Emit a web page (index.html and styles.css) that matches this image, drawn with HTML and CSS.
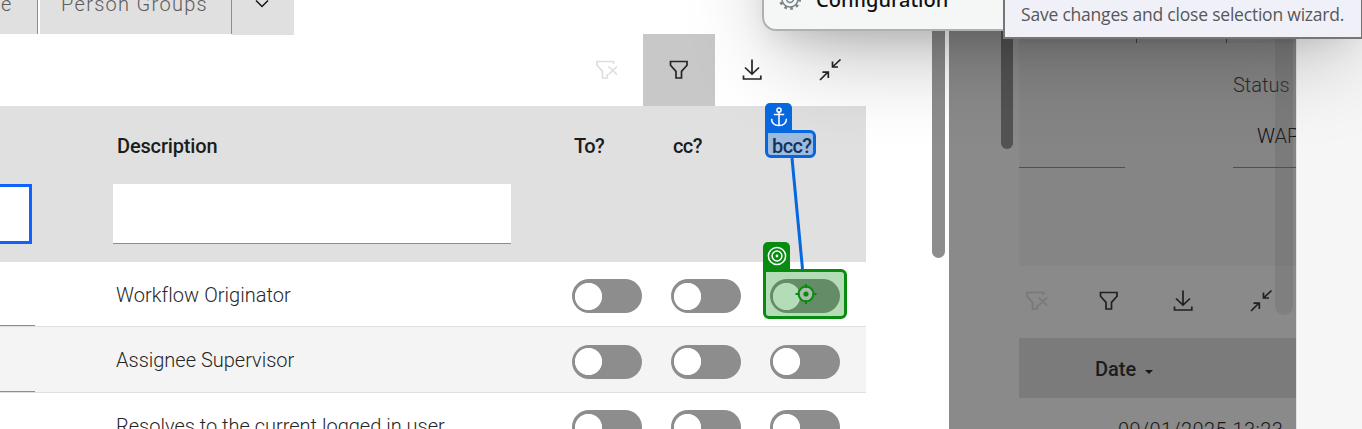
FILE: index.html
```html
<!DOCTYPE html>
<html lang="en">
<head>
<meta charset="utf-8">
<title>Person Groups</title>
<link rel="stylesheet" href="styles.css">
</head>
<body>
<svg class="defs" width="0" height="0" aria-hidden="true">
  <symbol id="i-funnel" viewBox="0 0 24 24"><path d="M3.500 3.500h16.500v3.700l-5.500 6.200v6.600h-5.500v-6.600l-5.500-6.200z"/></symbol>
  <symbol id="i-funnel-x" viewBox="0 0 24 24"><path d="M18.500 6V3.500H2v3.700l5.500 6.200v6.600h4.800v-4M13.500 8.500l8.500 8M22 8.500l-8.500 8"/></symbol>
  <symbol id="i-download" viewBox="0 0 24 24"><path d="M12 1.500v14M5 9.500l7 6.500 7-6.500M3.500 17.500v3.500h17.300v-3.500"/></symbol>
  <symbol id="i-collapse" viewBox="0 0 24 24"><path d="M22.500 1.500l-7.500 7M14.500 3.500v5.500h5.500M2 22l7.500-7.500M4.500 14.200h5.800V20"/></symbol>
</svg>
<div class="app">
  <main class="wizard">
    <div class="wizard-body">
      <nav class="tabs">
        <div class="tab tab-cut"><span>e</span></div>
        <div class="tab tab-groups"><span>Person Groups</span></div>
        <div class="tab-more"><svg width="16" height="10" viewBox="0 0 16 10"><path d="M2 .500l6 6 6-6"/></svg></div>
      </nav>
      <div class="toolbar">
        <div class="tool tool-off"><svg class="icon"><use href="#i-funnel-x"/></svg></div>
        <div class="tool tool-on"><svg class="icon"><use href="#i-funnel"/></svg></div>
        <div class="tool tool-download"><svg class="icon"><use href="#i-download"/></svg></div>
        <div class="tool tool-collapse"><svg class="icon"><use href="#i-collapse"/></svg></div>
      </div>
      <div class="table-head">
        <div class="cell-key"><div class="input input-focus"></div></div>
        <div class="cell-desc"><b class="t-desc">Description</b><div class="input"></div></div>
        <b class="cell-to">To?</b>
        <b class="cell-cc">cc?</b>
        <b class="cell-bcc">bcc?</b>
      </div>
      <div class="row">
        <div class="cell-key"></div><div class="cell-desc t-r1">Workflow Originator</div>
        <i class="toggle"></i><i class="toggle"></i><i class="toggle"></i>
      </div>
      <div class="row row-alt">
        <div class="cell-key"></div><div class="cell-desc t-r2">Assignee Supervisor</div>
        <i class="toggle"></i><i class="toggle"></i><i class="toggle"></i>
      </div>
      <div class="row row-last">
        <div class="cell-key"></div><div class="cell-desc t-r3">Resolves to the current logged in user</div>
        <i class="toggle"></i><i class="toggle"></i><i class="toggle"></i>
      </div>
    </div>
    <div class="scroll"></div>
  </main>
  <section class="page">
    <div class="page-gutter"><div class="page-thumb"></div></div>
    <div class="page-body">
      <div class="page-tabs"><i></i><i></i><i></i></div>
      <div class="form">
        <div class="field field-empty"></div>
        <div class="field field-status"><span class="t-status">Status</span><span class="t-wappr">WAPPR</span></div>
      </div>
      <div class="page-tools">
        <svg class="icon faint"><use href="#i-funnel-x"/></svg>
        <svg class="icon"><use href="#i-funnel"/></svg>
        <svg class="icon"><use href="#i-download"/></svg>
        <svg class="icon last"><use href="#i-collapse"/></svg>
      </div>
      <div class="date-head"><b class="t-date">Date</b><i class="caret"></i></div>
      <div class="date-row"><span class="t-time">09/01/2025 13:23</span></div>
      <div class="page-thumb2"></div>
    </div>
  </section>
  <aside class="edge"></aside>
</div>

<div class="shade"></div>
<div class="menu">
  <svg width="24" height="24" viewBox="-12 -12 24 24" class="gear"><circle r="8"/><circle r="3.500"/><circle r="9.600" class="teeth"/></svg>
  <span class="t-config">Configuration</span>
</div>
<div class="tooltip"><span class="t-tip">Save changes and close selection wizard.</span></div>

<svg class="link" width="40" height="120" viewBox="0 0 40 120"><path d="M12 3L22.500 114"/></svg>
<div class="marker anchor">
  <div class="badge"><svg width="20" height="22" viewBox="0 0 20 22"><circle cx="10" cy="4" r="2.100"/><path d="M10 6v14M4.800 8.500h10.400M2.600 12.800c0 4.500 3 6.800 7.400 6.800s7.400-2.300 7.400-6.800"/></svg></div>
</div>
<div class="marker target">
  <div class="badge"><svg width="20" height="20" viewBox="0 0 20 20"><circle cx="10" cy="10" r="8.600"/><circle cx="10" cy="10" r="4.900"/><circle cx="10" cy="10" r="1.400" class="dot"/></svg></div>
  <svg class="cross" width="22" height="22" viewBox="0 0 22 22"><circle cx="11" cy="11" r="7.400"/><circle cx="11" cy="11" r="2.600" class="dot"/><path d="M11 1v4M11 17v4M.500 11h4M17.500 11h4"/></svg>
</div>
</body>
</html>
```
FILE: styles.css
```css
* { box-sizing: border-box; }
body { margin: 0; width: 1362px; height: 429px; overflow: hidden; position: relative; background: #fff; color: #262626; font: 300 20px/26px Roboto, "Liberation Sans", sans-serif; }
b { font-weight: 500; color: #1c1c1c; }
span, b { white-space: nowrap; }
.defs { position: absolute; }
.app { display: flex; width: 1362px; height: 429px; }

.wizard { width: 949px; display: flex; justify-content: space-between; background: #fff; overflow: hidden; }
.wizard-body { width: 866px; }
.scroll { width: 13px; height: 258px; margin-right: 4px; border-radius: 0 0 7px 7px; background: #8d8d8d; }

.tabs { display: flex; height: 34px; color: #5c5c5c; }
.tab { height: 34px; background: #e0e0e0; border-right: 1px solid #8d8d8d; }
.tab span { display: block; margin-top: -9px; }
.tab-cut { width: 38px; margin-right: 2px; }
.tab-cut span { padding-left: 1px; }
.tab-groups { width: 192px; padding-left: 21px; letter-spacing: 1.3px; }
.tab-more { width: 62px; height: 35px; padding-left: 22px; background: #e0e0e0; }
.tab-more svg { display: block; fill: none; stroke: #161616; stroke-width: 1.500; }

.toolbar { display: flex; height: 72px; padding-left: 571px; }
.tool { width: 72px; height: 72px; display: grid; place-items: center; }
.tool-on { background: #c8c8c8; }
.tool-download { margin-left: 2px; }
.tool-collapse { margin-left: 6px; }
.tool-off { color: #dedede; }
.icon { width: 24px; height: 24px; display: block; fill: none; stroke: currentColor; stroke-width: 1.700; }

.table-head { display: flex; height: 156px; background: #e0e0e0; }
.table-head > b { padding-top: 27px; letter-spacing: -.6px; }
.cell-key { width: 113px; flex: none; }
.cell-desc { width: 459px; flex: none; }
.table-head .cell-desc { padding: 27px 61px 0 0; }
.t-desc { display: block; padding-left: 4px; height: 51px; letter-spacing: -.15px; }
.table-head .cell-key { padding-top: 78px; }
.input { height: 60px; background: #fff; border-bottom: 1px solid #8d8d8d; }
.input-focus { width: 32px; border: 3px solid #0f62fe; border-left: 0; }
.cell-to { width: 99px; padding-left: 2px; }
.cell-cc { width: 99px; padding-left: 2px; }
.cell-bcc { padding-left: 2px; }

.row { display: flex; height: 65px; padding-top: 17px; border-bottom: 1px solid #dedfde; }
.row .cell-key { height: 47px; background: linear-gradient(#8d8d8d, #8d8d8d) 0 100% / 35px 1px no-repeat; }
.row .cell-desc { padding: 3px 0 0 3px; }
.t-r1 { letter-spacing: .05px; }
.row-alt { height: 66px; padding-top: 18px; background: #f4f4f4; }
.row-alt .cell-desc { padding-top: 2px; }
.row-last { height: 70px; border: 0; }
.toggle { width: 70px; height: 34px; margin-right: 29px; flex: none; border-radius: 17px; background: radial-gradient(circle at 16.500px 17.500px, #fff 13.200px, #8d8d8d 14px); }
.row-alt .toggle { background: radial-gradient(circle at 16.500px 16.500px, #fff 13.200px, #8d8d8d 14px); }

.page { width: 347px; display: flex; background: #8a8a8a; overflow: hidden; }
.page-gutter { width: 70px; padding-left: 52px; flex: none; }
.page-thumb { width: 12px; height: 149px; border-radius: 0 0 6px 6px; background: #535353; }
.page-body { width: 277px; position: relative; }
.page-tabs { height: 43px; background: #7f7f7f; display: flex; }
.page-tabs i { border-right: 1px solid #3f3f3f; }
.page-tabs i:nth-child(1) { width: 118px; }
.page-tabs i:nth-child(2) { width: 90px; }
.page-tabs i:nth-child(3) { border: 0; }
.form { height: 223px; display: flex; justify-content: space-between; background: #858585; }
.field { height: 125px; border-bottom: 1px solid #505050; }
.field-empty { width: 106px; }
.field-status { width: 63px; padding-top: 29px; overflow: hidden; }
.t-status { display: block; height: 51px; color: #2c2c2c; }
.t-wappr { display: block; padding-left: 24px; color: #101010; }
.page-tools { height: 72px; display: flex; gap: 50px; padding: 23px 0 0 6px; color: #202020; }
.page-tools .icon { flex: none; }
.page-tools .faint { color: #787878; margin-right: -2px; }
.page-tools .last { margin-left: 4px; }
.date-head { height: 60px; display: flex; padding: 18px 0 0 76px; background: #7b7b7b; }
.caret { width: 0; height: 0; margin: 14px 0 0 9px; border: 4px solid transparent; border-top: 4px solid #161616; border-bottom: 0; }
.date-row { padding: 19px 0 0 99px; color: #181818; letter-spacing: .45px; }
.page-thumb2 { position: absolute; right: 3px; top: 0; width: 18px; height: 315px; border-radius: 0 0 9px 9px; background: rgba(95, 90, 90, .22); }
.edge { width: 66px; background: #f6f6f6; border-left: 1px solid #e4e4e4; }

.shade { position: absolute; left: 772px; top: -200px; width: 580px; height: 226px; box-shadow: 0 34px 90px -8px rgba(0, 0, 0, .28), 0 10px 30px 0 rgba(0, 0, 0, .12); }
.menu { position: absolute; left: 762px; top: -20px; width: 300px; height: 51px; border: 2px solid #adb1b3; border-radius: 0 0 0 14px; background: #f4f7f6; }
.gear { position: absolute; left: 14px; top: 5px; fill: none; stroke: #7d858b; stroke-width: 1.500; }
.gear .teeth { stroke-width: 3; stroke-dasharray: 2.700 3.332; }
.t-config { position: absolute; left: 52px; top: 5px; font: 500 20px/26px "Noto Sans", sans-serif; color: #111; }
.tooltip { position: absolute; left: 1003px; top: -20px; width: 359px; height: 59px; border: 1px solid #767676; border-width: 1px 1px 2px 2px; background: #f0f1f8; }
.t-tip { position: absolute; left: 16px; top: 20px; font: 400 17.500px/26px "Open Sans", sans-serif; letter-spacing: -.21px; color: #575757; }

.link { position: absolute; left: 780px; top: 155px; fill: none; stroke: #0667df; stroke-width: 3; }
.marker { position: absolute; border: 3px solid; border-radius: 0 6px 6px 6px; }
.anchor { left: 765px; top: 130px; width: 51px; height: 28px; border-color: #0667df; background: rgba(6, 103, 223, .3); }
.target { left: 763px; top: 269px; width: 84px; height: 50px; border-color: #078c10; background: rgba(7, 140, 16, .3); }
.badge { position: absolute; left: -3px; top: -30px; width: 27px; height: 27px; display: grid; place-items: center; border-radius: 5px 5px 0 0; background: #0667df; }
.badge svg { display: block; fill: none; stroke: #fff; stroke-width: 1.500; }
.target .badge { background: #078c10; }
.badge .dot { fill: #fff; stroke: none; }
.cross { position: absolute; left: 28.500px; top: 11px; fill: rgba(190, 200, 190, .8); stroke: #078c10; stroke-width: 2; }
.cross .dot { fill: #078c10; stroke: none; }
```
